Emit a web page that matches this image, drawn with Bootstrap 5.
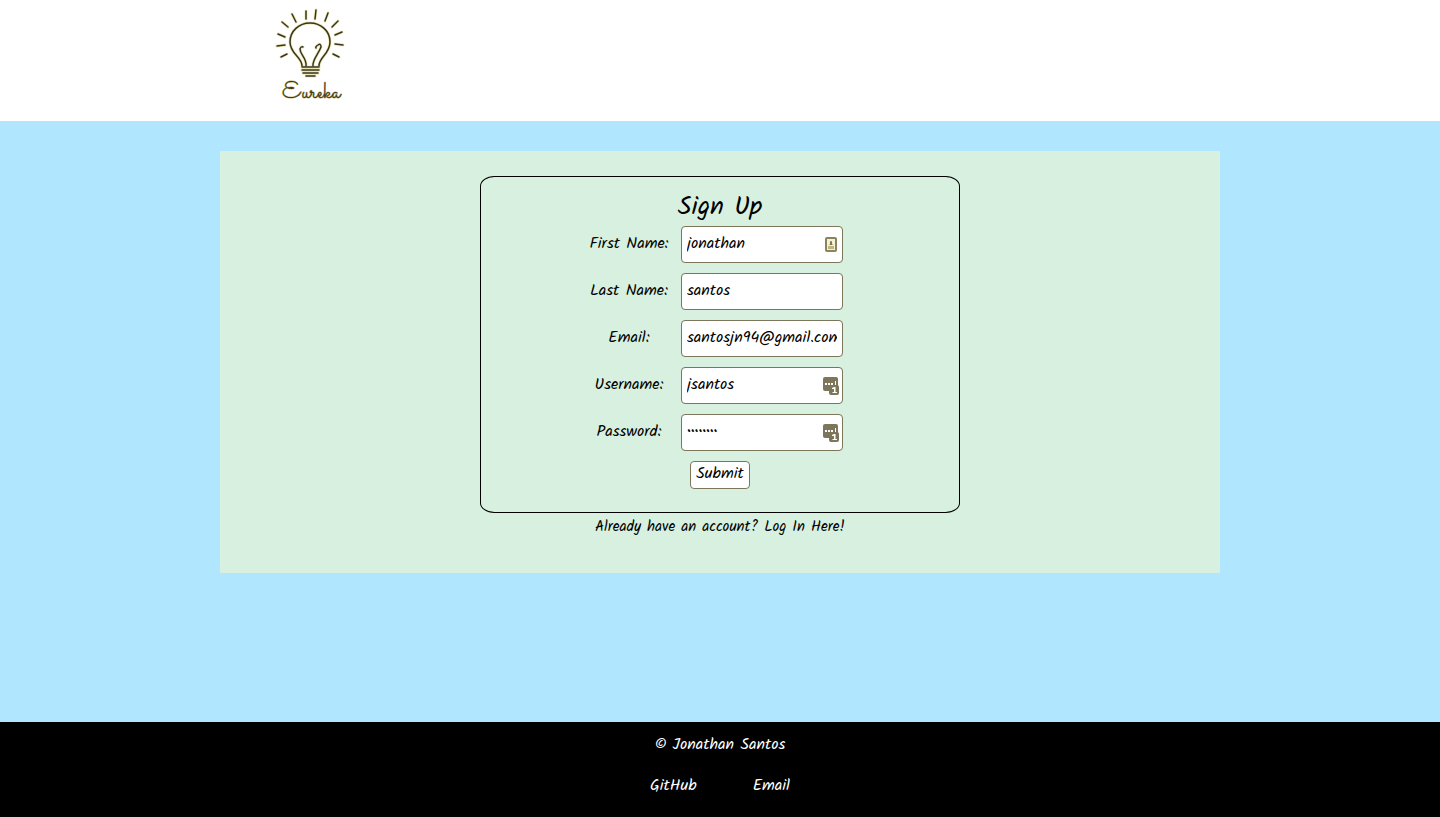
<!DOCTYPE html>
<html lang="en">
<head>
<meta charset="utf-8">
<meta name="viewport" content="width=device-width, initial-scale=1">
<title>Eureka - Sign Up</title>
<link href="https://cdn.jsdelivr.net/npm/bootstrap@5.3.0/dist/css/bootstrap.min.css" rel="stylesheet">
<style>
body { font-family: Kalam, Lato, sans-serif; font-size: 16px; line-height: 24px; color: #000; background: #b0e7ff; }
.inner { max-width: 1000px; }
.site-header { min-height: 121px; }
.site-main { padding: 30px 0; }
.panel { background: #d7f0df; padding: 25px 0 34px; }
.signup { max-width: 480px; border: 1px solid #000; border-radius: 3%; padding: 13px 0 23px; }
.signup h1 { font-size: 26px; line-height: 34px; font-weight: 400; margin: 0 0 2px; }
.fields { grid-template-columns: 84px 182px; row-gap: 10px; }
.fields label { line-height: 36px; }
.field-box { margin: 0 10px; }
.field-box .form-control { height: 37px; padding: 0 5px 2px; font-size: 16px; color: #000; border: 1px solid #7d765a; border-radius: 4px; }
.field-box svg { right: 4px; top: 9px; }
.field-box .vault-icon { right: 3px; }
.btn-submit { margin-top: 10px; height: 28px; padding: 0 5px 2px; line-height: 24px; font-size: 16px; background: #fff; border: 1px solid #7d765a; border-radius: 4px; }
.login-link { font-size: 15px; line-height: 24px; padding-top: 2px; }
.site-footer { background: #000; min-height: 95px; padding: 11px 0 19px; row-gap: 17px; }
.footer-links { column-gap: 56px; }
.logo-name { font-family: Sacramento, "Dancing Script", Kalam, Lato, cursive; font-size: 24px; paint-order: stroke; }
</style>
</head>
<body class="d-flex flex-column min-vh-100">
<header class="site-header bg-white">
  <div class="inner mx-auto px-5">
    <a href="#" class="d-inline-block" aria-label="Eureka">
      <svg class="d-block" width="90" height="110" viewBox="3 0 90 110" fill="none" stroke-linecap="round" stroke-linejoin="round">
        <defs>
          <g id="bulb">
            <path d="M37 66C37 57 25 54 25 42C25 31 34 23 45 23S65 31 65 42C65 54 54 57 54 66"/>
            <path d="M41 66C42 58 35 55 35 49Q36 46 38 47M48 66C47 60 54 53 56 47Q56 43 53 45T51 48"/>
            <path d="M37 67H54M37 70H54M38 73H53M41 76H50"/>
            <path d="M41 11V19M51 10L50 19M63 13L60 21M73 21L67 27M77 32L70 35M78 45L70 44M74 57L68 54M27 14L31 22M17 22L23 27M13 34L20 37M12 46L20 45M16 57L22 54"/>
          </g>
        </defs>
        <use href="#bulb" stroke="#ebe8b5" stroke-width="3"/>
        <use href="#bulb" stroke="#3a3420" stroke-width="1.5"/>
        <text class="logo-name" x="17" y="98" fill="#3a3420" stroke="#b5ae6c">Eureka</text>
      </svg>
    </a>
  </div>
</header>

<main class="site-main flex-grow-1">
  <div class="panel inner mx-auto text-center">
    <form class="signup mx-auto">
      <h1>Sign Up</h1>
      <div class="fields d-grid justify-content-center">
        <label for="first">First Name:</label>
        <div class="field-box position-relative">
          <input class="form-control" id="first" type="text" value="jonathan">
          <svg class="position-absolute" width="16" height="18" viewBox="0 0 16 18"><rect x="3" y="3" width="10" height="13" rx="1" fill="#f3f1d2" stroke="#8b835b" stroke-width="2"/><circle cx="8" cy="7" r="1" fill="#7d765a"/><path d="M7 7h2v2l1 1H6l1-1z" fill="#7d765a"/><path d="M5 11h6v3H5z" fill="#bdb77f"/></svg>
        </div>
        <label for="last">Last Name:</label>
        <div class="field-box"><input class="form-control" id="last" type="text" value="santos"></div>
        <label for="email">Email:</label>
        <div class="field-box"><input class="form-control" id="email" type="email" value="santosjn94@gmail.com"></div>
        <label for="user">Username:</label>
        <div class="field-box position-relative">
          <input class="form-control" id="user" type="text" value="jsantos">
          <svg class="vault-icon position-absolute" width="17" height="19" viewBox="0 0 17 19">
            <g id="vault"><rect x="0" y="1" width="15" height="14" rx="2" fill="#7d765a"/><path d="M2 7h2v2H2zM5 7h2v2H5zM8 7h2v2H8zM12 5h1v4h-1z" fill="#fff"/><rect x="6" y="9" width="10" height="10" rx="2" fill="#7d765a"/><path d="M9 12L11 11H12.500v5H14v1H9.500v-1H11v-3H9z" fill="#fff"/></g>
          </svg>
        </div>
        <label for="pass">Password:</label>
        <div class="field-box position-relative">
          <input class="form-control" id="pass" type="password" value="password">
          <svg class="vault-icon position-absolute" width="17" height="19" viewBox="0 0 17 19"><use href="#vault"/></svg>
        </div>
      </div>
      <button class="btn-submit" type="submit">Submit</button>
    </form>
    <a href="#" class="login-link d-block text-black text-decoration-none">Already have an account? Log In Here!</a>
  </div>
</main>

<footer class="site-footer text-white d-flex flex-column align-items-center">
  <div>© Jonathan Santos</div>
  <nav class="footer-links d-flex">
    <a href="#" class="text-white text-decoration-none">GitHub</a>
    <a href="#" class="text-white text-decoration-none">Email</a>
  </nav>
</footer>
<script src="https://cdn.jsdelivr.net/npm/bootstrap@5.3.0/dist/js/bootstrap.bundle.min.js"></script>
</body>
</html>
